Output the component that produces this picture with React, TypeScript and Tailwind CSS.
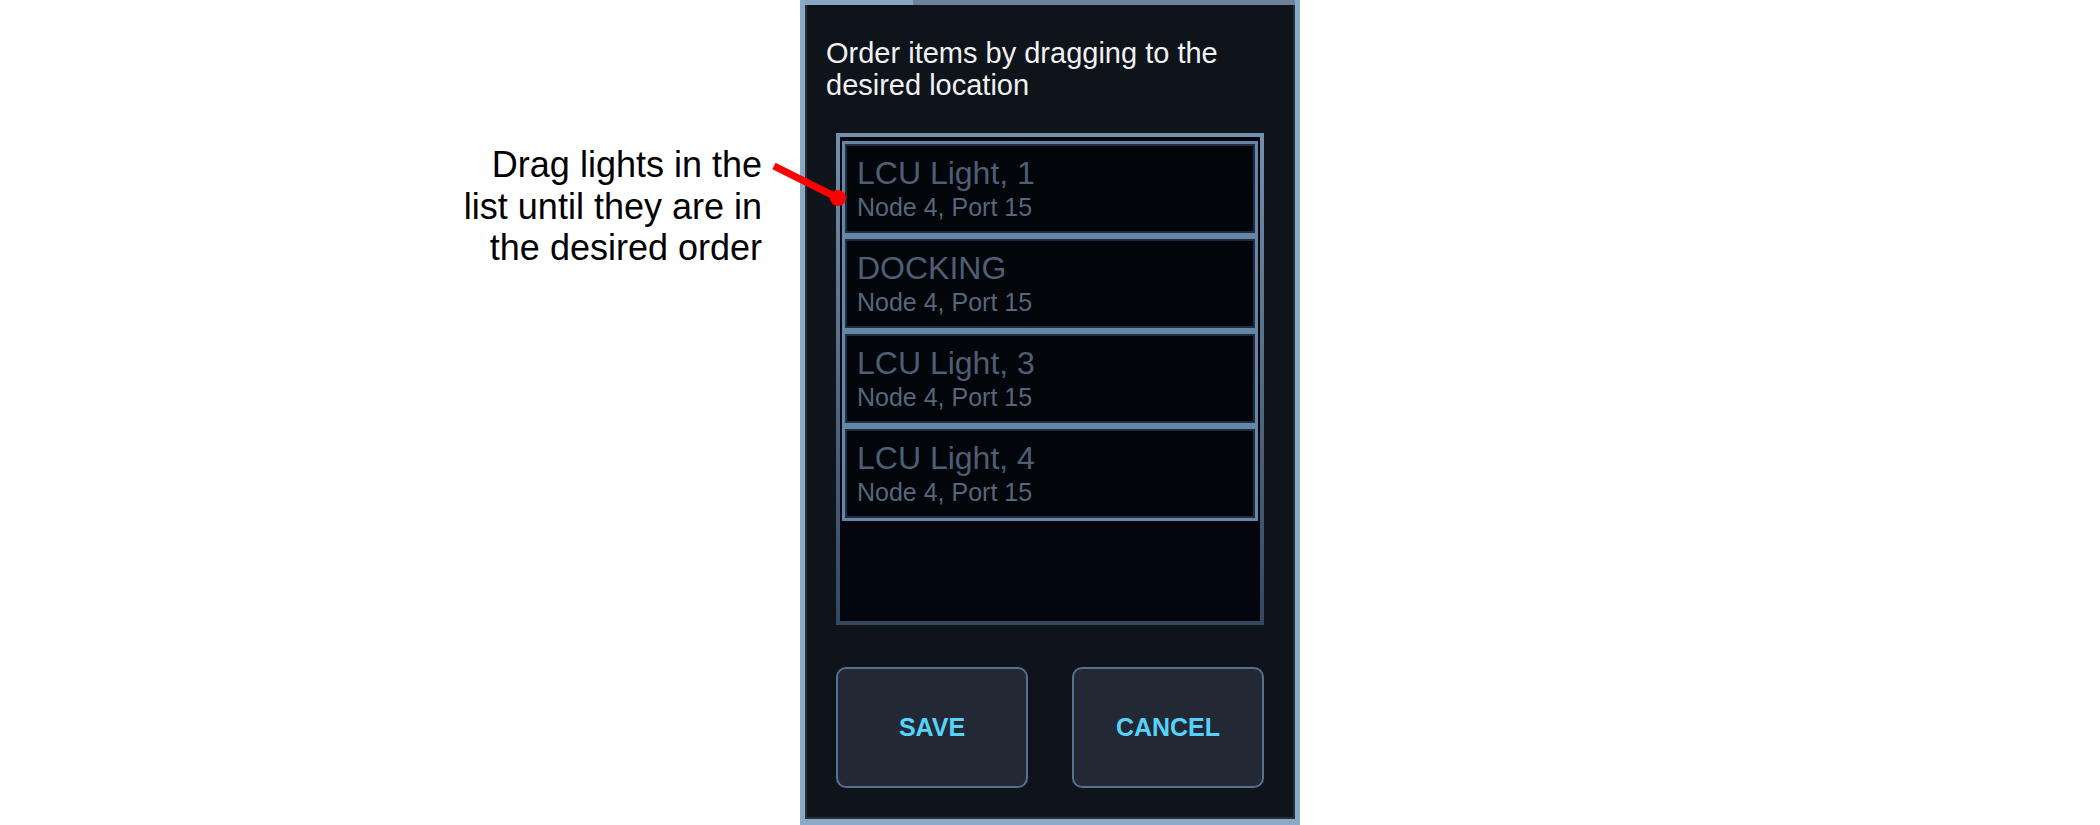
const items = [
  { title: "LCU Light, 1", sub: "Node 4, Port 15" },
  { title: "DOCKING", sub: "Node 4, Port 15" },
  { title: "LCU Light, 3", sub: "Node 4, Port 15" },
  { title: "LCU Light, 4", sub: "Node 4, Port 15" },
];

function ListItem({ title, sub }: { title: string; sub: string }) {
  return (
    <div className="h-[95px] border-[3px] border-[#6686a8] bg-[#02050a] pl-[12px] pt-[13px] shadow-[inset_0_0_0_2px_#1f2d40]">
      <div className="text-[32px] leading-[32px] text-[#4d5e75]">{title}</div>
      <div className="mt-[3px] text-[25px] leading-[30px] text-[#56677c]">{sub}</div>
    </div>
  );
}

function PanelButton({ label }: { label: string }) {
  return (
    <button className="flex h-[121px] w-[192px] items-center justify-center rounded-[10px] border-2 border-[#56708f] bg-[#222834] text-[25px] font-bold text-[#55d3fa]">
      {label}
    </button>
  );
}

export default function App() {
  return (
    <div
      className="relative flex h-[825px] w-full items-start bg-white"
      style={{ fontFamily: '"Liberation Sans", Arial, sans-serif' }}
    >
      {/* callout */}
      <div className="ml-[422px] mt-[144px] w-[340px] text-right text-[36px] leading-[41.5px] text-black">
        Drag lights in the
        <br />
        list until they are in
        <br />
        the desired order
      </div>

      {/* reorder panel */}
      <div className="ml-[38px] flex h-[825px] w-[500px] flex-col border-x-[5px] border-b-[6px] border-[#8aa9c4] bg-[#0f131a] shadow-[inset_0_0_0_2px_#26303c]">
        <div className="flex h-[5px] shrink-0">
          <div className="w-[108px] bg-[#86a6c2]" />
          <div className="flex-1 bg-[#6d8298]" />
        </div>

        <div className="mt-[32px] pl-[21px] text-[29px] leading-[32px] text-[#eef2f5]">
          Order items by dragging to the
          <br />
          desired location
        </div>

        <div className="mx-[31px] mt-[32px] h-[492px] bg-gradient-to-b from-[#7390ae] to-[#34475f] p-[4px]">
          <div className="flex h-full flex-col bg-[#03060c] px-[2px] pt-[4px]">
            {items.map((it, i) => (
              <ListItem key={i} title={it.title} sub={it.sub} />
            ))}
          </div>
        </div>

        <div className="mx-[31px] mt-[42px] flex justify-between">
          <PanelButton label="SAVE" />
          <PanelButton label="CANCEL" />
        </div>
      </div>

      {/* pointer line */}
      <svg className="pointer-events-none absolute left-0 top-0" width="2100" height="825">
        <line x1="774" y1="166" x2="838" y2="198" stroke="#ff0000" strokeWidth="7" />
        <circle cx="838" cy="198" r="8" fill="#ff0000" />
      </svg>
    </div>
  );
}
